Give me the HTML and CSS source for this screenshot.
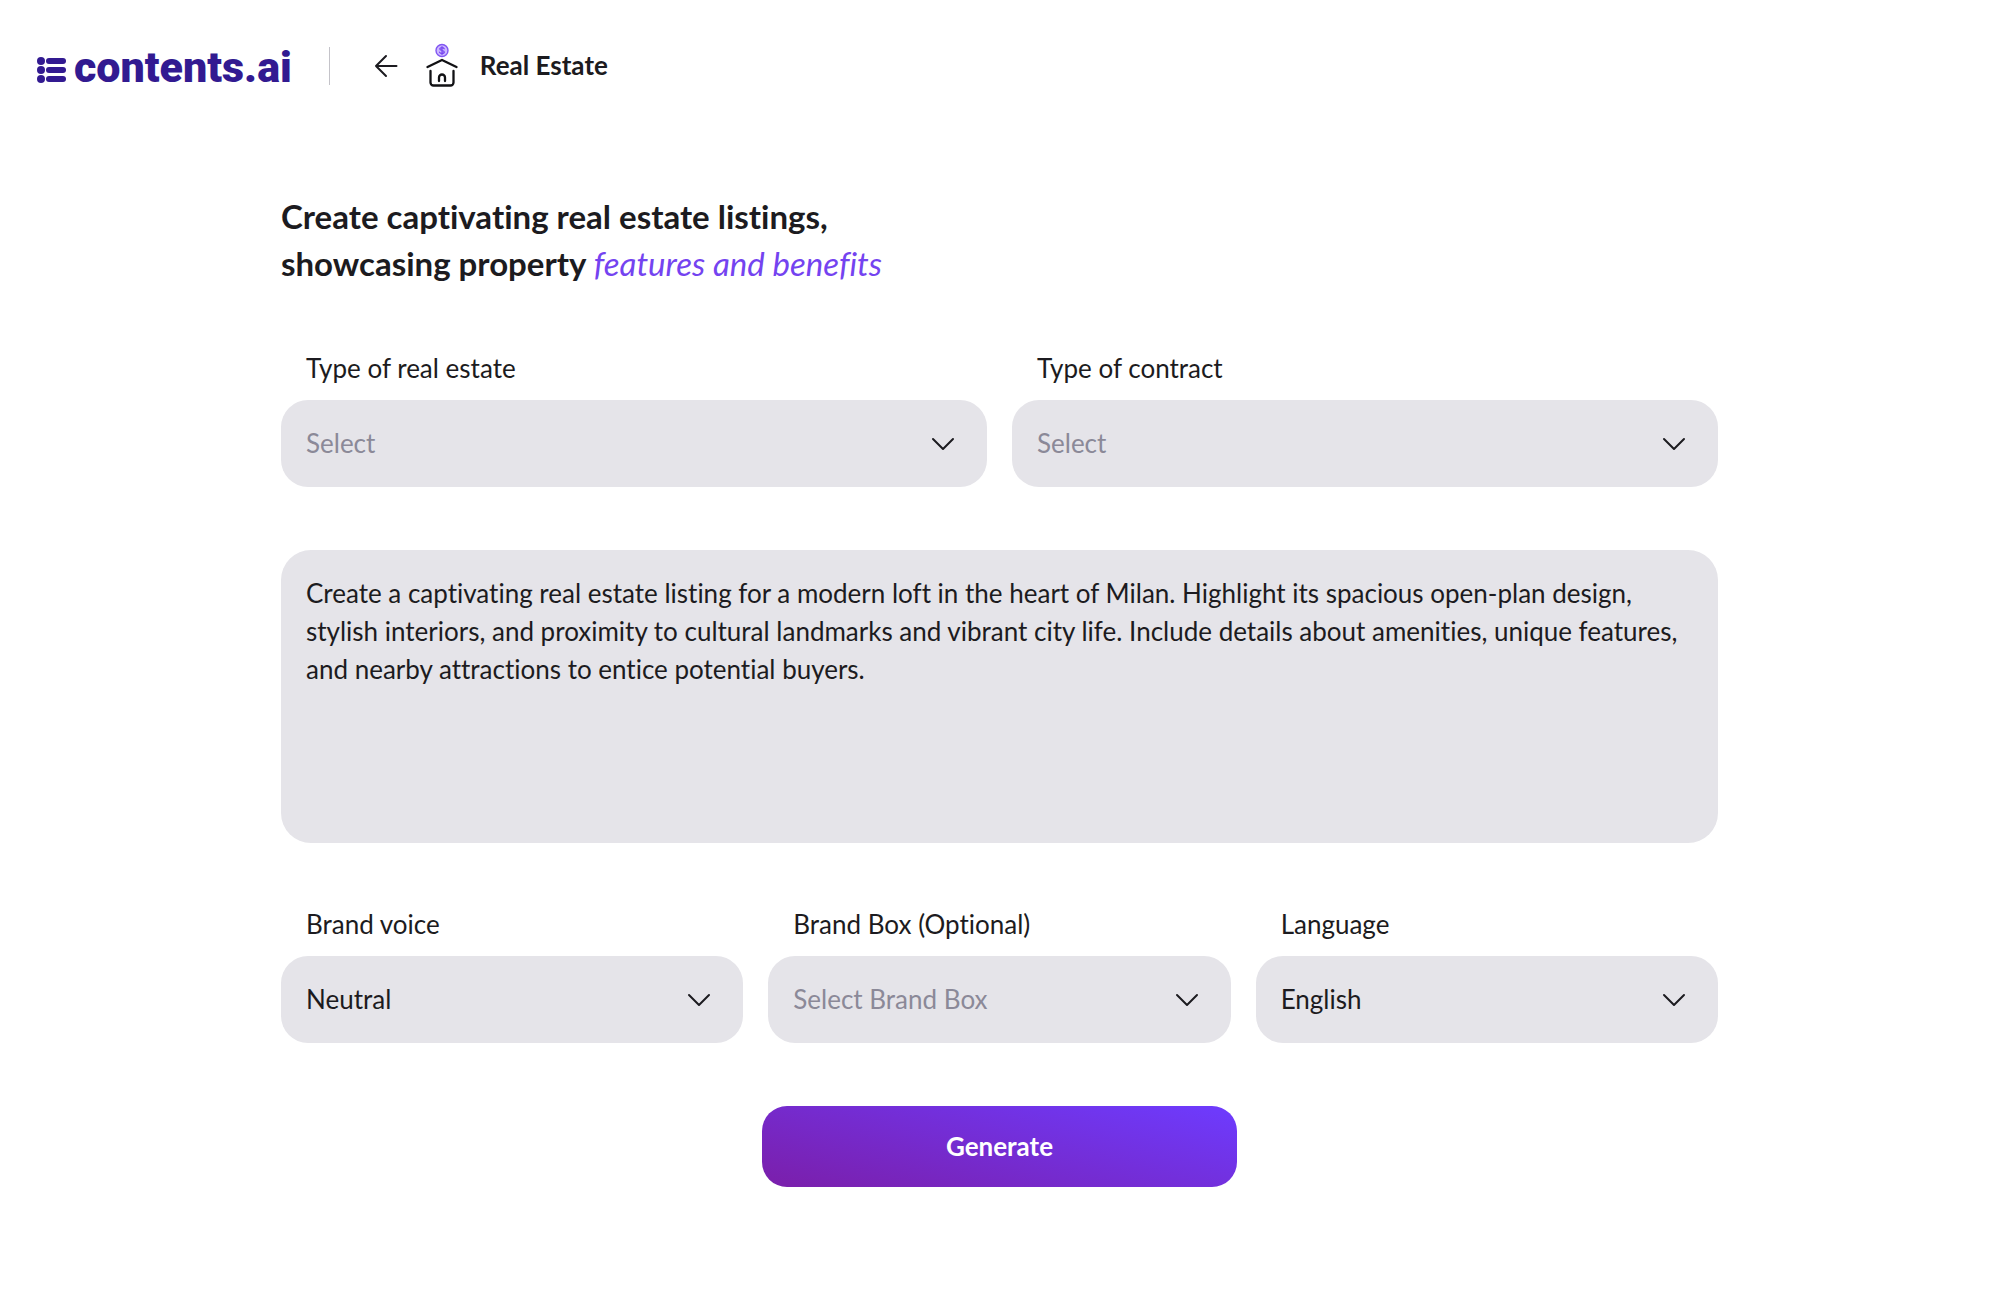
FILE: index.html
```
<!DOCTYPE html>
<html lang="en">
<head>
    <meta charset="utf-8">
    <meta name="viewport" content="width=device-width, initial-scale=1">
    <title>Real Estate - contents.ai</title>
    <link rel="stylesheet" href="styles.css">
</head>
<body>
    <header class="header">
        <a class="logo" href="#">
            <svg class="logo-mark" width="30" height="26" viewBox="0 0 30 26" fill="currentColor" aria-hidden="true">
                <circle cx="4" cy="4" r="4"/>
                <circle cx="4" cy="13" r="4"/>
                <circle cx="4" cy="22" r="4"/>
                <rect x="9" y="1" width="20" height="6" rx="3"/>
                <rect x="9" y="10" width="20" height="6" rx="3"/>
                <rect x="9" y="19" width="20" height="6" rx="3"/>
            </svg>
            <span>contents.ai</span>
        </a>
        <nav class="crumb">
            <a class="back" href="#" aria-label="Back">
                <svg width="24" height="24" viewBox="0 0 24 24" fill="none" stroke="currentColor" stroke-width="2" stroke-linecap="round" stroke-linejoin="round">
                    <path d="M22.5 12H2M12 2L2 12l10 10"/>
                </svg>
            </a>
            <svg class="house" width="32" height="46" viewBox="0 0 32 46" fill="none" stroke="#111114" stroke-width="2.3" stroke-linecap="round" stroke-linejoin="round" aria-hidden="true">
                <circle cx="16" cy="7.5" r="6" fill="#cdb8ff" stroke="#8156f2" stroke-width="1.4"/>
                <path d="M18.2 5.8c-.4-.8-1.2-1.1-2.2-1.1-1.3 0-2.2.5-2.2 1.4 0 2 4.5.8 4.500 2.900 0 .9-1 1.400-2.300 1.400-1.100 0-2-.4-2.400-1.200M16 3.600v7.800" stroke="#7443f0" stroke-width="1.2"/>
                <path d="M1.500 24L16 17l14.500 7"/>
                <path d="M4.500 28v11.500a3 3 0 0 0 3 3h17a3 3 0 0 0 3-3V28"/>
                <path d="M13 38v-3.500a3 3 0 0 1 6 0V38"/>
            </svg>
            <h1 class="page-name">Real Estate</h1>
        </nav>
    </header>

    <main class="content">
        <h2 class="intro">Create captivating real estate listings,<br>showcasing property <em>features and benefits</em></h2>

        <form class="form">
            <div class="row row-two">
                <div class="field">
                    <label for="estate-type">Type of real estate</label>
                    <div class="select">
                        <select id="estate-type" class="empty">
                            <option>Select</option>
                        </select>
                        <svg width="24" height="14" viewBox="0 0 24 14"><path d="M2 2l10 10L22 2"/></svg>
                    </div>
                </div>
                <div class="field">
                    <label for="contract-type">Type of contract</label>
                    <div class="select">
                        <select id="contract-type" class="empty">
                            <option>Select</option>
                        </select>
                        <svg width="24" height="14" viewBox="0 0 24 14"><path d="M2 2l10 10L22 2"/></svg>
                    </div>
                </div>
            </div>

            <textarea class="prompt" aria-label="Listing description">Create a captivating real estate listing for a modern loft in the heart of Milan. Highlight its spacious open-plan design, stylish interiors, and proximity to cultural landmarks and vibrant city life. Include details about amenities, unique features, and nearby attractions to entice potential buyers.</textarea>

            <div class="row row-three">
                <div class="field">
                    <label for="voice">Brand voice</label>
                    <div class="select">
                        <select id="voice">
                            <option>Neutral</option>
                        </select>
                        <svg width="24" height="14" viewBox="0 0 24 14"><path d="M2 2l10 10L22 2"/></svg>
                    </div>
                </div>
                <div class="field">
                    <label for="brand-box">Brand Box (Optional)</label>
                    <div class="select">
                        <select id="brand-box" class="empty">
                            <option>Select Brand Box</option>
                        </select>
                        <svg width="24" height="14" viewBox="0 0 24 14"><path d="M2 2l10 10L22 2"/></svg>
                    </div>
                </div>
                <div class="field">
                    <label for="language">Language</label>
                    <div class="select">
                        <select id="language">
                            <option>English</option>
                        </select>
                        <svg width="24" height="14" viewBox="0 0 24 14"><path d="M2 2l10 10L22 2"/></svg>
                    </div>
                </div>
            </div>

            <button class="generate" type="button">Generate</button>
        </form>
    </main>
</body>
</html>
```
FILE: styles.css
```
* {
    box-sizing: border-box;
}

body {
    margin: 0;
    background: #fff;
    color: #1c1b20;
    font-family: Lato, sans-serif;
    font-size: 26px;
    font-variant-ligatures: none;
    line-height: 38px;
}

a {
    color: inherit;
    text-decoration: none;
}

.header {
    display: flex;
    align-items: center;
    height: 132px;
    padding: 0 37px;
}

.logo {
    display: flex;
    align-items: center;
    gap: 7px;
    padding: 2px 37px 0 0;
    color: #321a91;
    font-family: Roboto, sans-serif;
    font-size: 43px;
    font-weight: 900;
}

.logo-mark {
    margin-top: 5px;
}

.crumb {
    display: flex;
    align-items: center;
    padding-left: 44px;
    border-left: 1px solid #c4c3c9;
}

.back {
    display: flex;
}

.house {
    margin: -4px 22px -4px 28px;
}

.page-name {
    margin: 0;
    padding-bottom: 2px;
    font-size: 26px;
    font-weight: 700;
    line-height: 36px;
}

.content {
    width: 72%;
    max-width: 1437px;
    margin: 0 auto;
    padding: 61px 0 80px;
}

.intro {
    margin: 0 0 63px;
    font-size: 33px;
    font-weight: 700;
    line-height: 47px;
}

.intro em {
    color: #7443f0;
    font-weight: 400;
}

.form {
    display: flex;
    flex-direction: column;
    gap: 63px;
}

.row {
    display: grid;
    gap: 25px;
}

.row-two {
    grid-template-columns: repeat(2, 1fr);
}

.row-three {
    grid-template-columns: repeat(3, 1fr);
}

.field {
    display: flex;
    flex-direction: column;
    gap: 14px;
}

.field label {
    padding-left: 25px;
    line-height: 36px;
}

.select {
    display: grid;
    align-items: center;
}

/* the arrow shares the grid cell of its select */
.select select,
.select svg {
    grid-area: 1 / 1;
}

.select select {
    width: 100%;
    height: 87px;
    padding: 0 70px 2px 25px;
    border: none;
    border-radius: 27px;
    appearance: none;
    background: #e5e4e9;
    color: inherit;
    font: inherit;
    cursor: pointer;
}

.select select.empty {
    color: #8b8998;
}

.select svg {
    justify-self: end;
    margin-right: 32px;
    fill: none;
    stroke: #1c1b20;
    stroke-width: 2;
    stroke-linecap: round;
    stroke-linejoin: round;
    pointer-events: none;
}

.prompt {
    display: block;
    width: 100%;
    height: 293px;
    padding: 24px 25px;
    border: none;
    border-radius: 30px;
    background: #e5e4e9;
    color: inherit;
    font: inherit;
    resize: none;
}

.generate {
    align-self: center;
    width: 33%;
    height: 81px;
    padding: 0 0 2px;
    border: none;
    border-radius: 25px;
    background: linear-gradient(15deg, #7a20ae 5%, #6e3afb 95%);
    color: #fff;
    font: inherit;
    font-weight: 700;
    cursor: pointer;
}

@media (max-width: 900px) {
    .content {
        width: auto;
        padding: 40px 24px;
    }

    .row-two,
    .row-three {
        grid-template-columns: 1fr;
    }

    .generate {
        width: 100%;
    }
}
```
